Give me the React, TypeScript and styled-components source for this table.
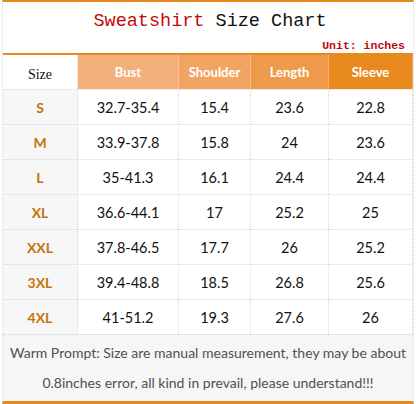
import React from "react";
import styled, { createGlobalStyle } from "styled-components";

const Global = createGlobalStyle`
  html, body {
    margin: 0;
    padding: 0;
    background: #fff;
  }
`;

const ORANGE = "#e8891e";

const Frame = styled.div`
  width: 412px;
  margin-left: 2px;
  height: 404px;
  box-sizing: border-box;
  border-top: 2px solid ${ORANGE};
  border-bottom: 3px solid ${ORANGE};
  border-left: 1px dotted #d6d6d6;
  border-right: 1px dotted #d6d6d6;
  display: flex;
  flex-direction: column;
  background: #fff;
`;

const TitleBlock = styled.div`
  height: 51px;
  display: flex;
  flex-direction: column;
  border-bottom: 2px solid ${ORANGE};
`;

const Title = styled.div`
  font-family: "Liberation Mono", "DejaVu Sans Mono", monospace;
  font-size: 18.5px;
  text-align: center;
  color: #111;
  padding-top: 9px;
  padding-left: 4px;
  line-height: 22px;
`;

const Red = styled.span`
  color: #c4090e;
`;

const Unit = styled.div`
  font-family: "Liberation Mono", monospace;
  font-weight: bold;
  font-size: 11.5px;
  color: #c4090e;
  text-align: right;
  padding-right: 8px;
  margin-top: 7px;
  line-height: 12px;
`;

const Grid = styled.div`
  display: grid;
  grid-template-columns: 75px 101px 72px 78px 84px;
  grid-template-rows: 34px repeat(7, 35px);
`;

const HeadCell = styled.div<{ $bg: string }>`
  background: ${(p) => p.$bg};
  color: #fff;
  font-family: Lato, "Open Sans", sans-serif;
  font-weight: bold;
  font-size: 13px;
  display: flex;
  align-items: center;
  justify-content: center;
  border-right: 1px solid rgba(255, 255, 255, 0.25);
`;

const SizeHead = styled.div`
  background: #fff;
  font-family: "Liberation Serif", serif;
  font-size: 14px;
  color: #111;
  display: flex;
  align-items: center;
  justify-content: center;
  padding-top: 6px;
  border-right: 1px dotted #d6d6d6;
`;

const Cell = styled.div<{ $size?: boolean }>`
  display: flex;
  align-items: center;
  justify-content: center;
  font-family: Lato, "Open Sans", sans-serif;
  font-size: ${(p) => (p.$size ? "14px" : "14.5px")};
  font-weight: ${(p) => (p.$size ? "bold" : "normal")};
  color: ${(p) => (p.$size ? "#c8730f" : "#111")};
  background: ${(p) => (p.$size ? "#f7f7f7" : "#fff")};
  border-top: 1px dotted #d8d8d8;
  border-right: 1px dotted #d8d8d8;
  box-sizing: border-box;
`;

const Prompt = styled.div`
  flex: 1;
  background: #f6f6f6;
  border-top: 1px dotted #d2d2d2;
  font-family: Lato, "Open Sans", sans-serif;
  font-size: 14px;
  color: #505050;
  text-align: center;
  line-height: 30px;
  padding-top: 3px;
`;

const heads = [
  { label: "Bust", bg: "#f4b07a" },
  { label: "Shoulder", bg: "#f2a462" },
  { label: "Length", bg: "#ef9a4a" },
  { label: "Sleeve", bg: "#e98a1f" },
];

const rows = [
  ["S", "32.7-35.4", "15.4", "23.6", "22.8"],
  ["M", "33.9-37.8", "15.8", "24", "23.6"],
  ["L", "35-41.3", "16.1", "24.4", "24.4"],
  ["XL", "36.6-44.1", "17", "25.2", "25"],
  ["XXL", "37.8-46.5", "17.7", "26", "25.2"],
  ["3XL", "39.4-48.8", "18.5", "26.8", "25.6"],
  ["4XL", "41-51.2", "19.3", "27.6", "26"],
];

export default function App() {
  return (
    <>
      <Global />
      <Frame>
        <TitleBlock>
          <Title>
            <Red>Sweatshirt</Red> Size Chart
          </Title>
          <Unit>Unit: inches</Unit>
        </TitleBlock>
        <Grid>
          <SizeHead>Size</SizeHead>
          {heads.map((h) => (
            <HeadCell key={h.label} $bg={h.bg}>
              {h.label}
            </HeadCell>
          ))}
          {rows.map((r) =>
            r.map((v, i) => (
              <Cell key={r[0] + i} $size={i === 0}>
                {v}
              </Cell>
            ))
          )}
        </Grid>
        <Prompt>
          Warm Prompt: Size are manual measurement, they may be about
          <br />
          0.8inches error, all kind in prevail, please understand!!!
        </Prompt>
      </Frame>
    </>
  );
}
